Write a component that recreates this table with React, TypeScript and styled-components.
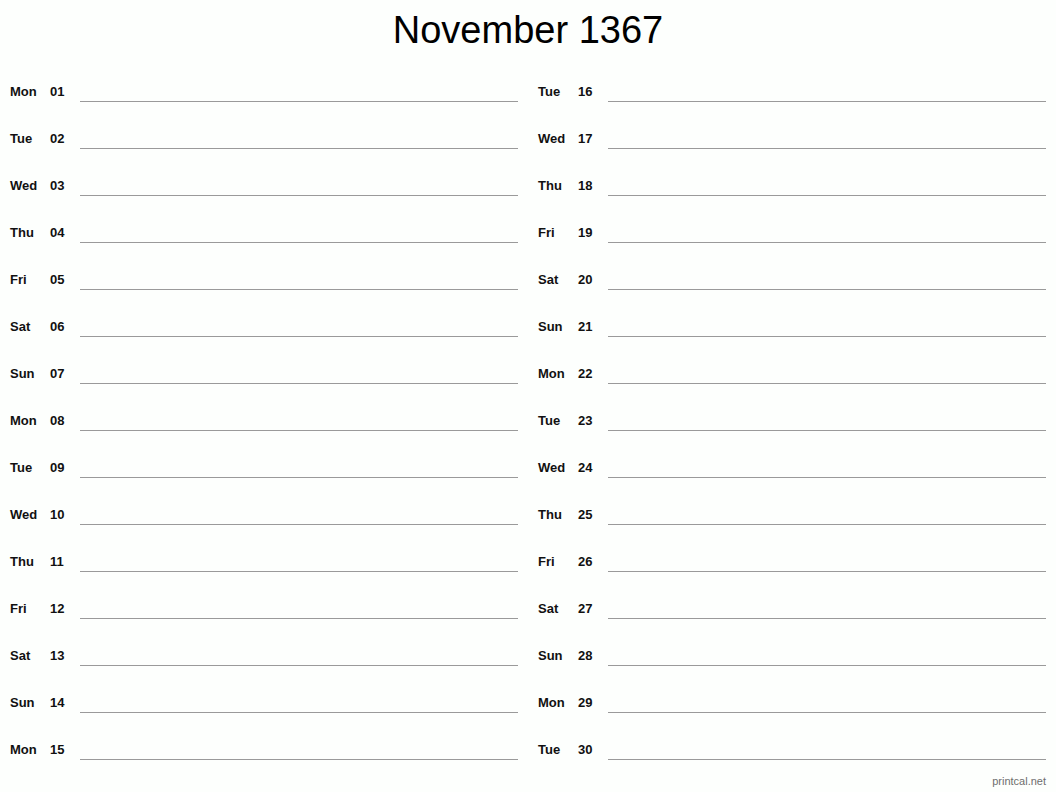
import React from 'react'
import styled, { createGlobalStyle } from 'styled-components'

const GlobalStyle = createGlobalStyle`
    html, body {
        margin: 0;
        padding: 0;
        background: #fdfffd;
    }
    body {
        font-family: "Liberation Sans", Arial, sans-serif;
        color: #111;
    }
`

const Page = styled.div`
    width: 1056px;
    height: 792px;
    box-sizing: border-box;
    padding: 9px 10px 0;
    display: flex;
    flex-direction: column;
`

const Title = styled.h1`
    margin: 2px 0 6px;
    height: 38px;
    line-height: 38px;
    font-size: 38px;
    font-weight: normal;
    text-align: center;
    color: #000;
`

const Columns = styled.div`
    display: grid;
    grid-template-columns: 1fr 1fr;
    column-gap: 20px;
`

const Column = styled.div`
    display: flex;
    flex-direction: column;
`

const Row = styled.div`
    display: flex;
    align-items: flex-end;
    height: 47px;
`

const Label = styled.span<{ $width: number }>`
    width: ${p => p.$width}px;
    flex: none;
    font-size: 13px;
    line-height: 15px;
    font-weight: bold;
    margin-bottom: 3px;
`

const WriteLine = styled.div`
    flex: 1;
    height: 100%;
    box-sizing: border-box;
    border-bottom: 1px solid #9a9a9a;
`

const Footer = styled.div`
    margin-top: 15px;
    text-align: right;
    font-size: 11px;
    line-height: 13px;
    color: #6e6e6e;
`

const days = ['Mon', 'Tue', 'Wed', 'Thu', 'Fri', 'Sat', 'Sun']

type Entry = { day: string; num: string }

const entries: Entry[] = Array.from({ length: 30 }, (_, i) => ({
    day: days[i % 7],
    num: String(i + 1).padStart(2, '0'),
}))

const DayRow = ({ day, num }: Entry) => (
    <Row>
        <Label $width={40}>{day}</Label>
        <Label $width={30}>{num}</Label>
        <WriteLine />
    </Row>
)

const App = () => (
    <>
        <GlobalStyle />
        <Page>
            <Title>November 1367</Title>
            <Columns>
                <Column>
                    {entries.slice(0, 15).map(e => <DayRow key={e.num} {...e} />)}
                </Column>
                <Column>
                    {entries.slice(15).map(e => <DayRow key={e.num} {...e} />)}
                </Column>
            </Columns>
            <Footer>printcal.net</Footer>
        </Page>
    </>
)

export default App
